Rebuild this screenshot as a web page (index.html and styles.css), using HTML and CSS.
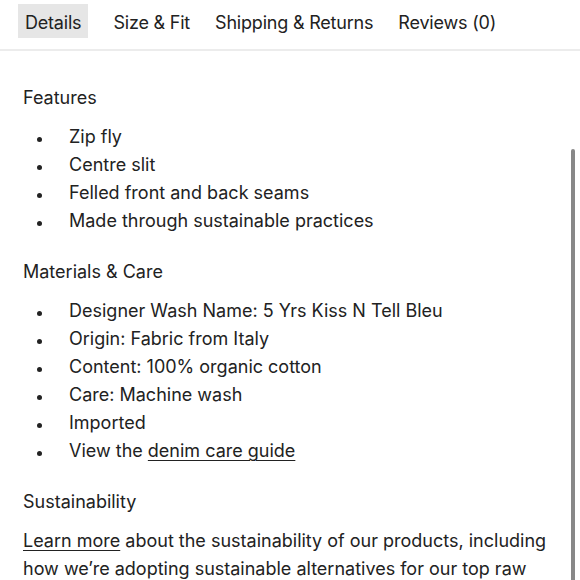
FILE: index.html
```html
<!DOCTYPE html>
<html lang="en">
<head>
<meta charset="utf-8">
<title>Product details</title>
<link rel="stylesheet" href="styles.css">
</head>
<body>
<nav class="tabs">
  <span class="tab active">Details</span>
  <span class="tab">Size &amp; Fit</span>
  <span class="tab">Shipping &amp; Returns</span>
  <span class="tab">Reviews (0)</span>
</nav>
<main class="content">
  <h3 class="heading">Features</h3>
  <ul class="list">
    <li>Zip fly</li>
    <li>Centre slit</li>
    <li>Felled front and back seams</li>
    <li>Made through sustainable practices</li>
  </ul>
  <h3 class="heading">Materials &amp; Care</h3>
  <ul class="list">
    <li>Designer Wash Name: 5 Yrs Kiss N Tell Bleu</li>
    <li>Origin: Fabric from Italy</li>
    <li>Content: 100% organic cotton</li>
    <li>Care: Machine wash</li>
    <li>Imported</li>
    <li><span>View the <a href="#" class="link">denim care guide</a></span></li>
  </ul>
  <h3 class="heading">Sustainability</h3>
  <p class="para"><a href="#" class="link">Learn more</a> about the sustainability of our products, including how we’re adopting sustainable alternatives for our top raw materials and how we’re reducing our impact.</p>
</main>
<div class="scrollbar"></div>
</body>
</html>
```
FILE: styles.css
```css
html, body {
  margin: 0;
  padding: 0;
  background: #fff;
  overflow: hidden;
  height: 580px;
}
body {
  font-family: "Inter", "Open Sans", sans-serif;
  color: #222;
  font-size: 18px;
  position: relative;
}
.tabs {
  display: flex;
  gap: 11px;
  padding: 4px 0 11px 18px;
  border-bottom: 2px solid #ececec;
}
.tab {
  height: 30px;
  line-height: 30px;
  padding: 4px 7px 0;
  white-space: nowrap;
  letter-spacing: -0.2px;
}
.tab.active {
  background: #e6e6e6;
  margin-right: 7px;
}
.content {
  padding: 33px 23px 0 23px;
}
.heading {
  margin: 23px 0 11px;
  font-size: 18px;
  font-weight: 400;
  line-height: 28px;
}
.heading:first-child {
  margin-top: 0;
}
.list {
  list-style: none;
  margin: 0;
  padding: 0;
}
.list li {
  display: flex;
  align-items: center;
  line-height: 28px;
}
.list li::before {
  content: "";
  width: 5px;
  height: 5px;
  border-radius: 50%;
  background: #222;
  margin: 4px 27px 0 14px;
  flex: none;
}
.link {
  color: #222;
  text-decoration: underline;
  text-underline-offset: 3px;
  text-decoration-thickness: 1px;
}
.para {
  margin: 0;
  line-height: 28px;
  max-width: 530px;
}
.scrollbar {
  position: absolute;
  top: 149px;
  right: 5px;
  width: 4px;
  height: 440px;
  background: #888;
  border-radius: 2px;
}
```
